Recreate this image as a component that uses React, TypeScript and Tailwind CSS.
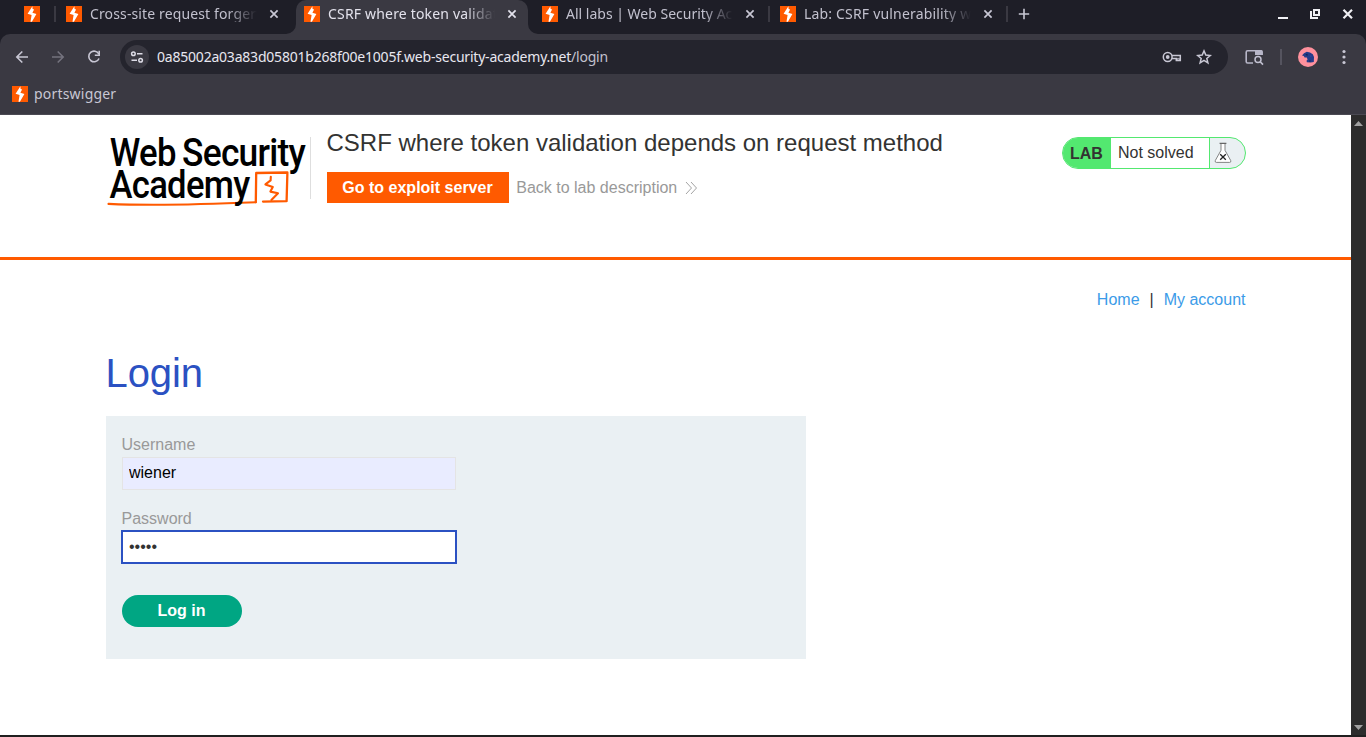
import React from "react";

const UI_FONT = "font-['Noto_Sans','Open_Sans',sans-serif]";

function Favicon() {
  return (
    <svg width="16" height="16" viewBox="0 0 16 16" className="block shrink-0">
      <rect width="16" height="16" fill="#ff5a00" />
      <path d="M8.4 0.2 3.6 7.7 7.6 9 6.5 15.8H7.9L12.4 8 8.4 6.7 10.1 3.5 8.6 3.1Z" fill="#fff" />
    </svg>
  );
}

function CloseIcon({ color }: { color: string }) {
  return (
    <svg width="10" height="10" viewBox="0 0 10 10" className="block shrink-0">
      <path d="M1.4 1.4 8.6 8.6M8.6 1.4 1.4 8.6" stroke={color} strokeWidth="1.7" fill="none" />
    </svg>
  );
}

type TabProps = { title: string; active?: boolean; separator?: boolean; spacing: string };

function Tab({ title, active, separator, spacing }: TabProps) {
  return (
    <div className="relative flex h-[34px] w-[238px] shrink-0 items-start">
      {active && (
        <>
          <div className="absolute inset-y-0 left-0 w-[232px] rounded-t-[10px] bg-[#3a3942]" />
          <svg className="absolute bottom-0 -left-[10px]" width="10" height="10" viewBox="0 0 10 10">
            <path d="M10 0V10H0A10 10 0 0 0 10 0Z" fill="#3a3942" />
          </svg>
          <svg className="absolute bottom-0 left-[232px]" width="10" height="10" viewBox="0 0 10 10">
            <path d="M0 0V10H10A10 10 0 0 1 0 0Z" fill="#3a3942" />
          </svg>
        </>
      )}
      <div className="relative flex w-full items-center pt-[6px] pl-2">
        <Favicon />
        <div
          className={`ml-2 h-4 w-[167px] overflow-hidden text-[14px] leading-[16px] whitespace-nowrap [mask-image:linear-gradient(to_right,black_82%,transparent)] ${spacing} ${
            active ? "text-[#e3e2ec]" : "text-[#c2c1ce]"
          }`}
        >
          {title}
        </div>
        <div className="ml-3">
          <CloseIcon color={active ? "#e3e2ec" : "#c8c7d4"} />
        </div>
      </div>
      {separator && <div className="absolute top-[6px] right-[2px] h-4 w-[2px] bg-[#3a3942]" />}
    </div>
  );
}

function TabStrip() {
  return (
    <div className="flex h-[34px] bg-[#1e1e27]">
      <div className="flex w-[58px] items-start pt-[6px] pl-6">
        <Favicon />
        <div className="ml-[14px] h-4 w-[2px] bg-[#3a3942]" />
      </div>
      <Tab title="Cross-site request forgery" spacing="tracking-[0.13px]" />
      <Tab title="CSRF where token validation" active spacing="tracking-[0.18px]" />
      <Tab title="All labs | Web Security Academy" separator spacing="tracking-[0px]" />
      <Tab title="Lab: CSRF vulnerability where" separator spacing="tracking-[0.18px]" />
      <svg width="12" height="12" viewBox="0 0 12 12" className="mt-2 ml-2">
        <path d="M6 .8V11.2M.8 6H11.2" stroke="#c8c7d4" strokeWidth="1.6" />
      </svg>
      <svg width="80" height="20" viewBox="0 0 80 20" className="mt-1 ml-auto mr-[10px]" fill="none">
        <path d="M2 14H12" stroke="#f0f0f4" strokeWidth="2" />
        <path d="M38 6H43V11H38Z" stroke="#f0f0f4" strokeWidth="2" />
        <path d="M35 7V14H42" stroke="#f0f0f4" strokeWidth="2" />
        <path d="M67.5 5.8 76 14.3M76 5.8 67.5 14.3" stroke="#f0f0f4" strokeWidth="2.2" />
      </svg>
    </div>
  );
}

function Toolbar() {
  return (
    <div className="bg-[#1e1e27]">
      <div className="flex h-[46px] items-center rounded-t-[10px] bg-[#3a3942]">
        <svg width="120" height="46" viewBox="0 0 120 46" fill="none" className="shrink-0">
          <path d="M28 23H17M22.3 17.5 16.8 23 22.3 28.5" stroke="#c8c7d4" strokeWidth="1.6" />
          <path d="M52 23H63M57.7 17.5 63.2 23 57.7 28.5" stroke="#74737e" strokeWidth="1.6" />
          <path d="M98.8 20A5.3 5.3 0 1 0 99 24.5" stroke="#c8c7d4" strokeWidth="1.6" />
          <path d="M99.2 16.8V21.2H94.8" stroke="#c8c7d4" strokeWidth="1.6" />
        </svg>
        <div className="flex h-[34px] w-[1108px] shrink-0 items-center rounded-full bg-[#24242d] pl-[5px]">
          <div className="flex h-6 w-6 items-center justify-center rounded-full bg-[#3a3942]">
            <svg width="14" height="14" viewBox="0 0 14 14" fill="none" stroke="#dddce6" strokeWidth="1.5">
              <circle cx="3.4" cy="3.7" r="1.8" />
              <path d="M7 3.7H12.5M1.5 10.3H7" />
              <circle cx="10.6" cy="10.3" r="1.8" />
            </svg>
          </div>
          <div className="ml-2 w-[460px] text-[14px] leading-[20px] tracking-[-0.21px] whitespace-nowrap text-[#e8e7f0]">
            0a85002a03a83d05801b268f00e1005f.web-security-academy.net<span className="text-[#c2c1ce]">/login</span>
          </div>
          <svg width="60" height="24" viewBox="0 0 60 24" className="mr-3 ml-auto" fill="none" stroke="#c8c7d4">
            <circle cx="11.7" cy="12" r="4.4" strokeWidth="1.5" />
            <circle cx="11.7" cy="12" r="1.9" fill="#c8c7d4" stroke="none" />
            <path d="M15.8 10.4H24.3V15.4H20.3V13.4H15.8" strokeWidth="1.5" />
            <path d="M21.2 13.4H23.6V15H21.2Z" strokeWidth=".8" />
            <path
              d="M48 5.9 49.8 10.1 54.2 10.5 50.8 13.4 51.9 17.8 48 15.4 44.1 17.8 45.2 13.4 41.8 10.5 46.2 10.1Z"
              strokeWidth="1.5"
            />
          </svg>
        </div>
        <svg width="138" height="46" viewBox="0 0 138 46" fill="none" className="shrink-0">
          <path d="M25 29H19.6Q18.2 29 18.2 27.6V18.2Q18.2 16.8 19.6 16.8H32.6Q34 16.8 34 18.2V21" stroke="#b7b6c8" strokeWidth="1.6" />
          <path d="M27 16H33Q34.8 16 34.8 18V21H27Z" fill="#b7b6c8" />
          <circle cx="30" cy="25.6" r="3" stroke="#c1c0d0" strokeWidth="1.5" />
          <path d="M32.2 27.8 35 30.6" stroke="#c1c0d0" strokeWidth="1.6" />
          <rect x="52" y="15" width="2" height="16" fill="#55545f" />
          <circle cx="80" cy="23" r="10" fill="#ff919d" />
          <path d="M74 21.4 76 19.2 78.8 17.8 82 18.4 84.8 20.2 86 23 85.8 28 82.6 28.5 78.8 28.2 78.6 26.4 79.6 25.4 78.8 23.4 76.6 23.6 75.8 22Z" fill="#253b89" />
          <path d="M77.4 20.3 79.3 19.8 79.9 21.6 78.4 21.6Z" fill="#142459" />
          <path d="M82 21.4H83.6V22.8H82Z" fill="#2f479f" />
          <path d="M81 26.4H82.6V27.4H81Z" fill="#142459" />
          <circle cx="116" cy="17.5" r="1.6" fill="#c8c7d4" />
          <circle cx="116" cy="23" r="1.6" fill="#c8c7d4" />
          <circle cx="116" cy="28.5" r="1.6" fill="#c8c7d4" />
        </svg>
      </div>
    </div>
  );
}

function BookmarkBar() {
  return (
    <div className="flex h-[35px] items-start border-b border-[#4b4a53] bg-[#3a3942] pt-[6px] pl-3 text-[#c8c7d4]">
      <Favicon />
      <span className="ml-[6px] text-[14px] leading-[16px] tracking-[0.2px]">portswigger</span>
    </div>
  );
}

function AcademyLogo() {
  return (
    <svg width="204" height="76" viewBox="0 0 204 76" className="block shrink-0">
      <g fill="none" stroke="#ff5a00" strokeLinecap="round" strokeLinejoin="round">
        <path d="M2.5 66.9C40 68.6 90 67.8 149.8 65.3" strokeWidth="2.1" />
        <path d="M149.8 65.2 150.2 36 181.4 35.5 180.6 64.2 157 64.6" strokeWidth="2.3" />
        <path d="M164.8 39.7 164.6 43.4 159.4 47.4 166.8 50 164.4 54.6 172 56.2 165.4 63" strokeWidth="2.1" />
      </g>
      <g fill="#000" fontFamily="Roboto, sans-serif" fontSize="38" fontWeight="500" letterSpacing="-0.8">
        <text x="3.8" y="28.8" textLength="66" lengthAdjust="spacingAndGlyphs">Web</text>
        <text x="76" y="28.8" textLength="123.2" lengthAdjust="spacingAndGlyphs">Security</text>
        <text x="3.6" y="61.4" textLength="139.8" lengthAdjust="spacingAndGlyphs">Academy</text>
      </g>
    </svg>
  );
}

function LabStatus() {
  return (
    <div className="flex h-8 w-[184px] overflow-hidden rounded-full border border-[#53e870] bg-[#eaf0f3] text-[16px] leading-[30px] text-[#333332]">
      <span className="w-[48px] bg-[#53e870] pl-[7.5px] pt-px font-bold">LAB</span>
      <span className="w-[99px] border-r border-[#53e870] bg-white pl-[7.5px]">Not solved</span>
      <svg width="20" height="24" viewBox="0 0 20 24" className="mt-[3px] ml-[3px]" fill="none">
        <path d="M8 2.5V9.3L2.3 19.5Q1.7 21.4 3.3 21.4H16.7Q18.3 21.4 17.7 19.5L12 9.3V2.5Z" fill="#fff" stroke="#777" strokeWidth=".9" />
        <path d="M6.6 2.3H13.4" stroke="#666" strokeWidth="1.2" />
        <path d="M7.2 13.2 12.8 18.8M12.8 13.2 7.2 18.8" stroke="#222" strokeWidth="1.3" />
      </svg>
    </div>
  );
}

function LabHeader() {
  return (
    <header className="h-[145px] border-b-[3px] border-[#ff5a00]">
      <div className="mx-auto flex w-[1140px] items-start pt-[22px]">
        <AcademyLogo />
        <div className="ml-[.5px] h-[62px] w-px bg-[#dedede]" />
        <div className="ml-[15.5px]">
          <h2 className="-mt-2 text-[24px] leading-[28px] text-[#333332]">CSRF where token validation depends on request method</h2>
          <div className="mt-[15px] flex items-center">
            <button className="h-[31px] w-[182px] bg-[#ff5a00] text-[16px] leading-[31px] font-bold text-white">Go to exploit server</button>
            <a className="ml-[7.75px] flex items-center text-[16px] leading-[31px] text-[#999]">
              Back to lab description
              <svg width="13" height="14" viewBox="0 0 13 14" className="ml-2" fill="none" stroke="#999" strokeWidth=".9">
                <path d="M1 1 6.5 7 1 13M6 1 11.5 7 6 13" />
              </svg>
            </a>
          </div>
        </div>
        <div className="ml-auto">
          <LabStatus />
        </div>
      </div>
    </header>
  );
}

function LoginForm() {
  return (
    <form className="h-[243px] w-[700px] bg-[#eaf0f3] px-4 pt-[20px] text-[16px]" onSubmit={(e) => e.preventDefault()}>
      <label className="block leading-[18px] text-[#999]">Username</label>
      <input
        readOnly
        type="text"
        value="wiener"
        className="mt-[3px] block h-[33px] w-[334px] border border-[#e4e4e4] bg-[#e9ecff] px-[6.5px] pb-[2px] text-black outline-none"
      />
      <label className="mt-[20px] block leading-[18px] text-[#999]">Password</label>
      <input
        readOnly
        type="password"
        value="peter"
        className="-ml-px mt-[2px] block h-[34px] w-[336px] border-2 border-[#2b51c2] bg-white px-[6.5px] text-[#333332] outline-none"
      />
      <button className="mt-[31px] h-8 w-[120px] rounded-full bg-[#00a683] pb-[2px] leading-[32px] font-bold text-white">Log in</button>
    </form>
  );
}

function ScrollBar() {
  return (
    <div className="flex w-[15px] flex-col items-center justify-between bg-[#2c2c2c] pt-[6px] pb-[5px]">
      <svg width="9" height="5" viewBox="0 0 9 5">
        <path d="M0 5 4.5 0 9 5Z" fill="#a0a0a0" />
      </svg>
      <svg width="9" height="5" viewBox="0 0 9 5">
        <path d="M0 0 4.5 5 9 0Z" fill="#a0a0a0" />
      </svg>
    </div>
  );
}

export default function App() {
  return (
    <div className="flex h-[737px] w-[1366px] flex-col overflow-hidden bg-[#202020]">
      <div className={UI_FONT}>
        <TabStrip />
        <Toolbar />
        <BookmarkBar />
      </div>
      <div className="flex h-[620px]">
        <main className="w-[1351px] bg-white font-['Liberation_Sans',Arial,sans-serif]">
          <LabHeader />
          <div className="mx-auto w-[1140px]">
            <nav className="flex justify-end pt-[31px] text-[16px] leading-[18px] text-[#3b9be8]">
              <a>Home</a>
              <span className="mx-[10px] text-[#333332]">|</span>
              <a>My account</a>
            </nav>
            <h1 className="mt-[41px] mb-[20px] text-[40px] leading-[46px] tracking-[-0.1px] text-[#2b51c2]">Login</h1>
            <LoginForm />
          </div>
        </main>
        <ScrollBar />
      </div>
    </div>
  );
}
